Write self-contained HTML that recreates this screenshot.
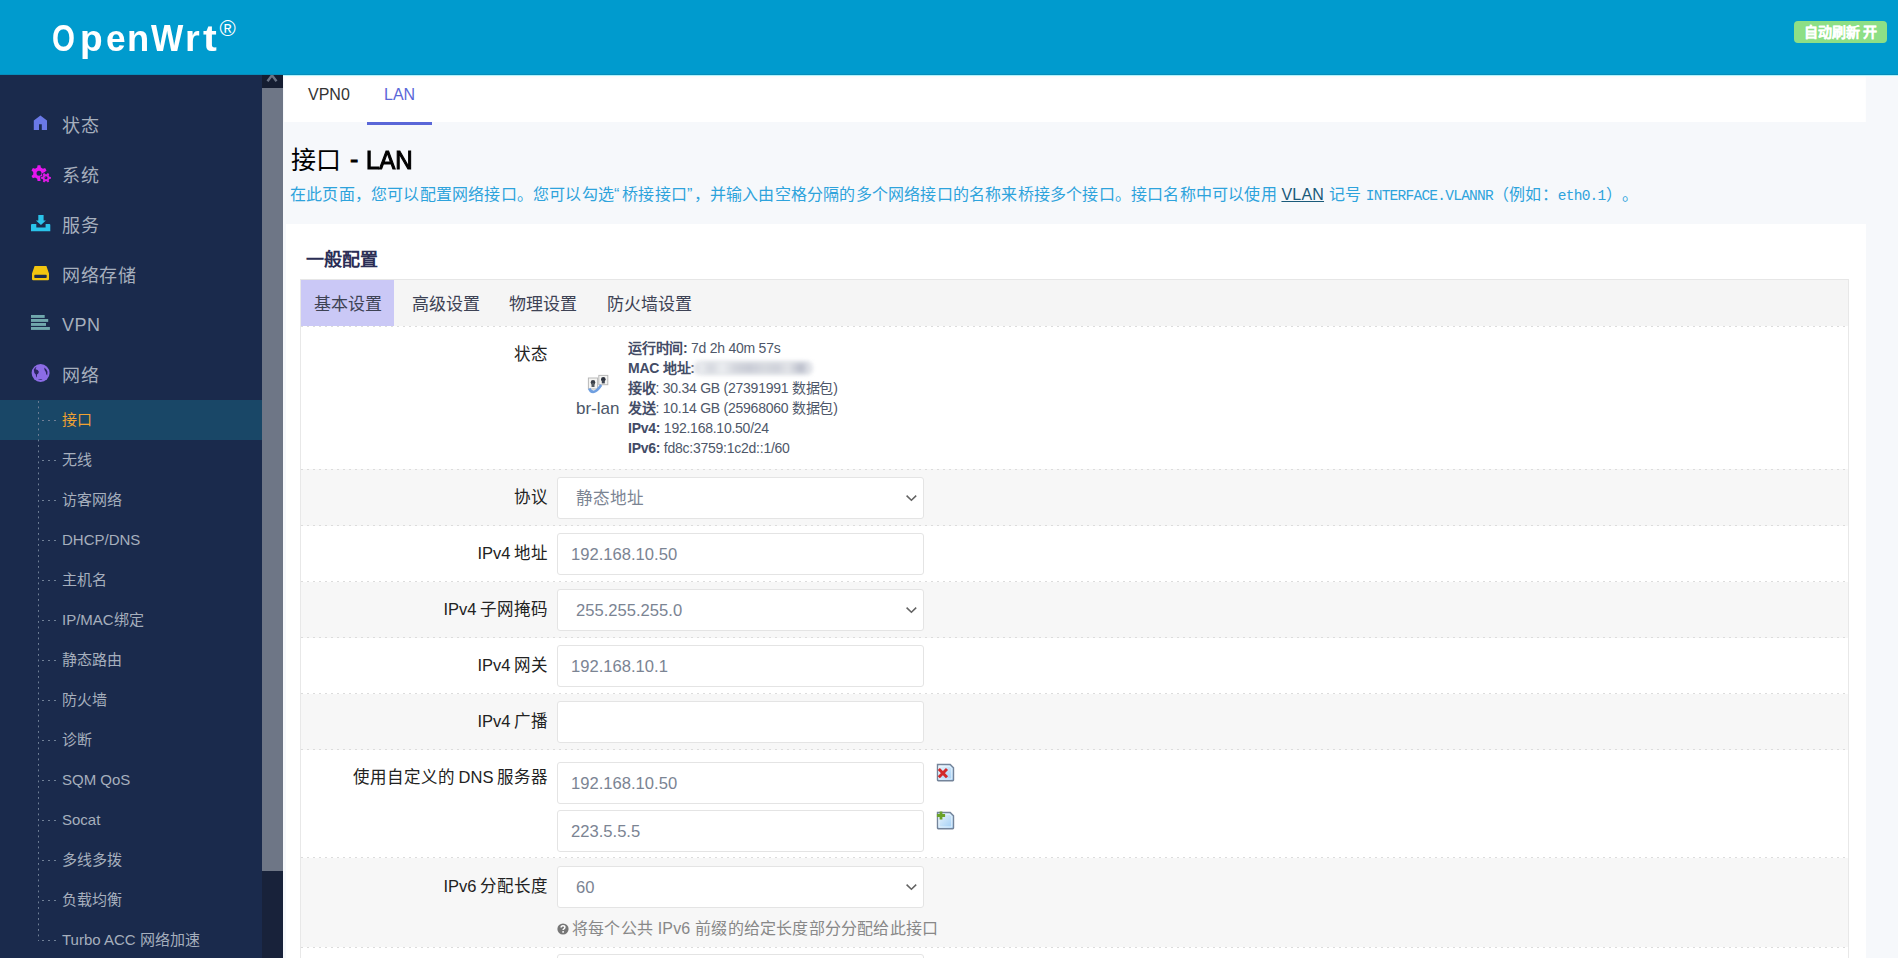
<!DOCTYPE html>
<html lang="zh-CN"><head><meta charset="utf-8">
<style>
html,body{margin:0;padding:0;}
body{width:1898px;height:958px;overflow:hidden;position:relative;background:#f6f8fb;font-family:"Liberation Sans",sans-serif;}
.abs{position:absolute;}
#hdr{left:0;top:0;width:1898px;height:75px;background:#009bce;}
#logo{left:52px;top:17px;width:200px;height:50px;color:#fff;font-weight:bold;font-size:36px;line-height:44px;white-space:nowrap;}
.lg{position:absolute;top:0;display:inline-block;transform:scaleX(0.88);transform-origin:0 0;}
.reg{position:absolute;left:167.5px;top:-10px;font-size:22px;font-weight:normal;}
#badge{left:1794px;top:21px;width:93px;height:22px;border-radius:4px;background:#8ddf86;color:#fff;font-weight:bold;font-size:14px;line-height:23px;-webkit-text-stroke:0.2px #fff;text-align:center;}
#side{left:0;top:75px;width:262px;height:883px;background:#1a2a4c;}
#sb{left:262px;top:75px;width:21px;height:883px;background:#18223a;}
#sbtop{left:262px;top:75px;width:21px;height:13px;background:#151d31;}
#thumb{left:262px;top:88px;width:21px;height:783px;background:#6e7686;}
.mi{position:absolute;letter-spacing:0.5px;left:62px;color:#a6afbd;font-size:18px;line-height:24px;white-space:nowrap;}
.ico{position:absolute;}
.sub{position:absolute;left:62px;color:#a6afbd;font-size:15px;line-height:20px;white-space:nowrap;}
.dots{position:absolute;left:42px;width:16px;height:1px;background-image:linear-gradient(to right,#6f7f96 30%,transparent 30%);background-size:6px 1px;}
#vline{left:38px;top:401px;width:1px;height:540px;background-image:linear-gradient(to bottom,#6f7f96 40%,transparent 40%);background-size:1px 5.5px;}
#hl{left:0;top:400px;width:262px;height:40px;background:#194767;}
/* main */
#tabbar{left:284px;top:75px;width:1582px;height:47px;background:#fff;box-shadow:inset 0 4px 5px -3px rgba(0,0,0,0.05);}
#cyl{left:283px;top:75px;width:1615px;height:1px;background:#b0f2fb;}
.tab{position:absolute;top:85px;font-size:16px;line-height:20px;color:#333;}
#tabul{left:367px;top:122px;width:65px;height:3px;background:#5a67d8;}
#title{left:291px;top:144px;font-size:25px;line-height:32px;color:#000;white-space:nowrap;}
#desc{text-spacing-trim:space-all;letter-spacing:0.2px;left:290px;top:185px;font-size:16px;line-height:20px;color:#2ea3dc;white-space:nowrap;}
#desc u{color:#1a5a7a;}
#desc .mono{font-family:"Liberation Mono",monospace;font-size:14.5px;letter-spacing:-0.75px;}
#card{left:286px;top:224px;width:1580px;height:734px;background:#fff;}
#legend{left:306px;top:249px;font-size:18px;line-height:22px;font-weight:bold;color:#2b2e55;}
#tbl{left:300px;top:279px;width:1547px;height:679px;border-left:1px solid #e8e8e8;border-right:1px solid #e8e8e8;border-top:1px solid #e6e6e6;background:#fff;}

.row{position:absolute;left:301px;width:1547px;}
.gray{background:#f7f7f7;}
.dash{position:absolute;left:301px;width:1547px;height:1px;background-image:linear-gradient(to right,#dcdcdc 34%,transparent 34%);background-size:6px 1px;}
.lbl{position:absolute;right:1350px;word-spacing:-1px;font-size:16.5px;line-height:20px;color:#222;white-space:nowrap;text-align:right;}
.inp{position:absolute;left:557px;width:365px;height:40px;border:1px solid #e4e4e4;border-radius:3px;background:#fff;}
.inp span{position:absolute;left:13px;top:10.5px;font-size:16.6px;line-height:20px;color:#7b8493;white-space:nowrap;}
.sel span{left:18px;}
.chev{position:absolute;right:5px;top:15px;}
#tabrow{left:301px;top:280px;width:1547px;height:46px;background:#f5f5f5;}
#acttab{left:301px;top:280px;width:93px;height:46px;background:#cac8f6;}
.ctab{position:absolute;top:295px;font-size:17px;line-height:20px;color:#3d4254;white-space:nowrap;}
.st{position:absolute;left:628px;font-size:14px;letter-spacing:-0.25px;line-height:20px;color:#4e5769;white-space:nowrap;}
.st b{color:#434c66;}
#brlan{left:576px;top:399px;font-size:17px;line-height:20px;color:#4c5667;}
.hint{position:absolute;letter-spacing:0.2px;left:557px;top:919px;font-size:16px;line-height:20px;color:#888;white-space:nowrap;}
</style></head><body>
<div id="hdr" class="abs"></div><div class="abs" style="left:0;top:74px;width:1898px;height:1px;background:#068cba"></div>
<div id="logo" class="abs"><span class="lg" style="left:0.0px;transform:scaleX(0.82)">O</span><span class="lg" style="left:27.6px;transform:scaleX(1.03)">p</span><span class="lg" style="left:53.8px;transform:scaleX(0.98)">e</span><span class="lg" style="left:75.0px;transform:scaleX(1.01)">n</span><span class="lg" style="left:99.4px;transform:scaleX(0.95)">W</span><span class="lg" style="left:133.4px;transform:scaleX(1.05)">r</span><span class="lg" style="left:151.4px;transform:scaleX(1.15)">t</span><span class="reg">®</span></div>
<div id="badge" class="abs">自动刷新 开</div>

<div id="side" class="abs"></div>
<div id="hl" class="abs"></div>
<div id="sb" class="abs"></div>
<div id="sbtop" class="abs"></div>
<div id="thumb" class="abs"></div><svg class="abs" style="left:266px;top:75px" width="12" height="8" viewBox="0 0 12 8"><path d="M1.5 6.3 L6 0.3 L10.5 6.3" fill="none" stroke="#6a7385" stroke-width="2.4"/></svg>


<svg class="ico" style="left:33px;top:115px" width="15" height="16" viewBox="0 0 15 16"><path d="M0.8 5.6 L7.4 0.6 L14 5.6 V15 H8.8 V9.3 H6 V15 H0.8Z" fill="#6a79e6"/></svg>
<svg class="ico" style="left:30px;top:164px" width="22" height="20" viewBox="0 0 22 20"><g transform="translate(1,0.6)"><path fill-rule="evenodd" fill="#e616ee" d="M6.18 2.99 L6.58 0.73 L9.42 0.73 L9.82 2.99 L11.95 4.22 L14.11 3.44 L15.53 5.89 L13.77 7.37 L13.77 9.83 L15.53 11.31 L14.11 13.76 L11.95 12.98 L9.82 14.21 L9.42 16.47 L6.58 16.47 L6.18 14.21 L4.05 12.98 L1.89 13.76 L0.47 11.31 L2.23 9.83 L2.23 7.37 L0.47 5.89 L1.89 3.44 L4.05 4.22Z M5.50 8.60 a2.5 2.5 0 1 0 5.0 0 a2.5 2.5 0 1 0 -5.0 0Z"/><path fill-rule="evenodd" fill="#dc1ae4" stroke="#1a2a4c" stroke-width="1.6" paint-order="stroke" d="M15.75 9.68 L16.69 8.50 L18.23 9.38 L17.68 10.79 L18.42 12.09 L19.92 12.31 L19.92 14.09 L18.42 14.31 L17.68 15.61 L18.23 17.02 L16.69 17.90 L15.75 16.72 L14.25 16.72 L13.31 17.90 L11.77 17.02 L12.32 15.61 L11.58 14.31 L10.08 14.09 L10.08 12.31 L11.58 12.09 L12.32 10.79 L11.77 9.38 L13.31 8.50 L14.25 9.68Z M13.50 13.20 a1.5 1.5 0 1 0 3.0 0 a1.5 1.5 0 1 0 -3.0 0Z"/></g></svg>
<svg class="ico" style="left:30px;top:214px" width="22" height="18" viewBox="0 0 22 18"><path fill="#2ac3ea" d="M8.3 1 H13.6 V6.4 H15.9 L10.95 10.9 L5.9 6.4 H8.3Z"/><path fill="#2ac3ea" d="M1 10.9 Q1 9.9 2 9.9 H6.3 V13.4 H15.6 V9.9 H19.3 Q20.3 9.9 20.3 10.9 V17.2 H1Z"/></svg>
<svg class="ico" style="left:31px;top:265px" width="19" height="16" viewBox="0 0 19 16"><path fill-rule="evenodd" fill="#f1c40f" d="M3.6 1 H15.4 L18 8.6 V14 Q18 15.2 16.8 15.2 H2.2 Q1 15.2 1 14 V8.6Z M3.3 10.4 Q3.3 9.7 4 9.7 H15 Q15.7 9.7 15.7 10.4 V12.2 Q15.7 12.9 15 12.9 H4 Q3.3 12.9 3.3 12.2Z"/></svg>
<svg class="ico" style="left:31px;top:315px" width="21" height="17" viewBox="0 0 21 17"><g fill="#70a8ad"><rect x="0" y="0" width="13.7" height="2.9"/><rect x="0" y="4" width="17.2" height="2.9"/><rect x="0" y="8" width="15" height="2.9"/><rect x="0" y="12" width="18.9" height="2.9"/></g></svg>
<svg class="ico" style="left:31px;top:363px" width="21" height="22" viewBox="0 0 21 22"><circle cx="9.6" cy="10" r="9" fill="#8c6ce6"/><g fill="#2a2660"><path d="M2.8 6.8 Q3.9 4.4 5.5 3.8 L4.5 6.3 Q7.1 6.7 7.9 8.8 Q7.6 11 6 11.6 L5.8 14.8 Q4.7 13.4 4.8 11.4 Q2.8 10.2 2.8 6.8Z"/><path d="M13.2 4.6 Q15.6 5.9 16.5 8.7 L16.2 12.4 Q14.8 11 14.8 8.9 Q13.2 7.9 13.2 4.6Z"/><path d="M6.9 16.8 Q9.2 15.9 11.6 16.4 Q9.6 17.6 6.9 16.8Z"/></g></svg>
<div class="mi" style="top:114px">状态</div>
<div class="mi" style="top:164px">系统</div>
<div class="mi" style="top:214px">服务</div>
<div class="mi" style="top:264px">网络存储</div>
<div class="mi" style="top:313px">VPN</div>
<div class="mi" style="top:364px">网络</div>

<div id="vline" class="abs"></div><div class="dots" style="top:420px"></div><div class="dots" style="top:460px"></div><div class="dots" style="top:500px"></div><div class="dots" style="top:540px"></div><div class="dots" style="top:580px"></div><div class="dots" style="top:620px"></div><div class="dots" style="top:660px"></div><div class="dots" style="top:700px"></div><div class="dots" style="top:740px"></div><div class="dots" style="top:780px"></div><div class="dots" style="top:820px"></div><div class="dots" style="top:860px"></div><div class="dots" style="top:900px"></div><div class="dots" style="top:940px"></div>
<div class="sub" style="top:410px;color:#f0a232">接口</div>
<div class="sub" style="top:450px">无线</div>
<div class="sub" style="top:490px">访客网络</div>
<div class="sub" style="top:530px">DHCP/DNS</div>
<div class="sub" style="top:570px">主机名</div>
<div class="sub" style="top:610px">IP/MAC绑定</div>
<div class="sub" style="top:650px">静态路由</div>
<div class="sub" style="top:690px">防火墙</div>
<div class="sub" style="top:730px">诊断</div>
<div class="sub" style="top:770px">SQM QoS</div>
<div class="sub" style="top:810px">Socat</div>
<div class="sub" style="top:850px">多线多拨</div>
<div class="sub" style="top:890px">负载均衡</div>
<div class="sub" style="top:930px">Turbo ACC 网络加速</div>

<div id="tabbar" class="abs"></div>
<div id="cyl" class="abs"></div>
<div class="tab" style="left:308px">VPN0</div>
<div class="tab" style="left:384px;color:#5a67d8">LAN</div>
<div id="tabul" class="abs"></div>

<div id="title" class="abs">接口<span style="margin-left:9px;-webkit-text-stroke:0.8px #000;position:relative;top:-1px">-</span><span style="margin-left:8px;display:inline-block;-webkit-text-stroke:1.1px #000;transform:scaleX(0.96);transform-origin:0 0">LAN</span></div>
<div id="desc" class="abs">在此页面，您可以配置网络接口。您可以勾选<span style="letter-spacing:2.9px">“</span>桥接接口<span style="letter-spacing:1.2px">”</span>，并输入由空格分隔的多个网络接口的名称来桥接多个接口。接口名称中可以使用 <u>VLAN</u> 记号 <span class="mono">INTERFACE.VLANNR</span>（例如：<span class="mono">eth0.1</span>）。</div>

<div id="card" class="abs"></div>
<div id="legend" class="abs">一般配置</div>
<div id="tbl" class="abs"></div>
<div id="tabrow" class="abs"></div>
<div id="acttab" class="abs"></div>
<div class="ctab" style="left:314px">基本设置</div>
<div class="ctab" style="left:412px">高级设置</div>
<div class="ctab" style="left:509px">物理设置</div>
<div class="ctab" style="left:607px">防火墙设置</div>

<div class="row gray" style="top:469px;height:57px"></div>
<div class="row gray" style="top:582px;height:56px"></div>
<div class="row gray" style="top:694px;height:56px"></div>
<div class="row gray" style="top:858px;height:89px"></div>
<div class="dash" style="top:326px"></div>
<div class="dash" style="top:469px"></div>
<div class="dash" style="top:525px"></div>
<div class="dash" style="top:581px"></div>
<div class="dash" style="top:637px"></div>
<div class="dash" style="top:693px"></div>
<div class="dash" style="top:749px"></div>
<div class="dash" style="top:857px"></div>
<div class="dash" style="top:947px"></div>

<div class="lbl" style="top:344px">状态</div>
<div class="st" style="top:338px"><b>运行时间:</b> 7d 2h 40m 57s</div>
<div class="st" style="top:358px"><b>MAC 地址:</b><span style="position:absolute;left:65px;top:3px;width:120px;height:14px;background:#e3e5ea;border-radius:7px;filter:blur(2px)"></span><span style="position:absolute;left:72px;top:5px;width:110px;height:10px;filter:blur(2.2px);background:linear-gradient(to right,#eceef1 0%,#d4d7de 10%,#eceef1 20%,#d2d5dc 32%,#c9ccd6 45%,#d6d9df 58%,#cfd2da 70%,#e2e4e8 80%,#b9bdca 92%,#e6e8ec 100%)"></span></div>
<div class="st" style="top:378px"><b>接收</b>: 30.34 GB (27391991 数据包)</div>
<div class="st" style="top:398px"><b>发送</b>: 10.14 GB (25968060 数据包)</div>
<div class="st" style="top:418px"><b>IPv4:</b> 192.168.10.50/24</div>
<div class="st" style="top:438px"><b>IPv6:</b> fd8c:3759:1c2d::1/60</div>
<div id="brlan" class="abs">br-lan</div><svg class="abs" style="left:586px;top:373px" width="24" height="21" viewBox="0 0 24 21"><rect x="12.8" y="2.4" width="9" height="9.3" fill="#f4f4f2" stroke="#b8b8b8" stroke-width="1"/><circle cx="17.3" cy="6.3" r="2.3" fill="#2d3340"/><rect x="15.8" y="7" width="3" height="3.4" fill="#3e4450"/><rect x="2.4" y="5" width="9.2" height="11" fill="#f4f4f2" stroke="#b8b8b8" stroke-width="1"/><circle cx="7" cy="9.4" r="2.3" fill="#3a3f48"/><rect x="5.5" y="10" width="3" height="4" fill="#555b60"/><path d="M3.3 15.5 Q4.5 19.3 8 18.8 Q11 18.2 15.2 12" fill="none" stroke="#6f9fe0" stroke-width="2.6"/></svg><svg width="0" height="0" style="position:absolute"><defs><linearGradient id="pg" x1="0" y1="0" x2="1" y2="1"><stop offset="0" stop-color="#eef7fd"/><stop offset="1" stop-color="#9ccbf4"/></linearGradient></defs></svg><svg class="abs" style="left:936px;top:763px" width="19" height="19" viewBox="0 0 19 19"><path d="M1.5 1.5 H14.2 L17.5 4.8 V17 Q17.5 17.7 16.8 17.7 H2.2 Q1.5 17.7 1.5 17Z" fill="url(#pg)" stroke="#74849a" stroke-width="1.4"/><path d="M3 3.2 H13.4 L15.8 5.6 V16 H3Z" fill="none" stroke="#f4fbff" stroke-width="0.9" opacity="0.8"/><path d="M2.8 6 L11 14.2 M11 6 L2.8 14.2" stroke="#d22a2a" stroke-width="3"/></svg><svg class="abs" style="left:936px;top:811px" width="19" height="19" viewBox="0 0 19 19"><path d="M1.5 1.5 H14.2 L17.5 4.8 V17 Q17.5 17.7 16.8 17.7 H2.2 Q1.5 17.7 1.5 17Z" fill="url(#pg)" stroke="#74849a" stroke-width="1.4"/><path d="M3 3.2 H13.4 L15.8 5.6 V16 H3Z" fill="none" stroke="#f4fbff" stroke-width="0.9" opacity="0.8"/><path d="M5 0.4 V8.6 M0.9 4.5 H9.1" stroke="#6aa22a" stroke-width="2.8"/></svg>

<div class="lbl" style="top:487px">协议</div>
<div class="inp sel" style="top:477px"><span>静态地址</span><svg class="chev" width="14" height="10" viewBox="0 0 14 10"><path d="M2.6 2.6 L7.4 7.2 L12.2 2.6" fill="none" stroke="#626262" stroke-width="1.5"/></svg></div>
<div class="lbl" style="top:543px">IPv4 地址</div>
<div class="inp" style="top:533px"><span>192.168.10.50</span></div>
<div class="lbl" style="top:599px">IPv4 子网掩码</div>
<div class="inp sel" style="top:589px"><span>255.255.255.0</span><svg class="chev" width="14" height="10" viewBox="0 0 14 10"><path d="M2.6 2.6 L7.4 7.2 L12.2 2.6" fill="none" stroke="#626262" stroke-width="1.5"/></svg></div>
<div class="lbl" style="top:655px">IPv4 网关</div>
<div class="inp" style="top:645px"><span>192.168.10.1</span></div>
<div class="lbl" style="top:711px">IPv4 广播</div>
<div class="inp" style="top:701px"><span></span></div>
<div class="lbl" style="top:767px">使用自定义的 DNS 服务器</div>
<div class="inp" style="top:762px"><span>192.168.10.50</span></div>
<div class="inp" style="top:810px"><span>223.5.5.5</span></div>
<div class="lbl" style="top:876px">IPv6 分配长度</div>
<div class="inp sel" style="top:866px"><span>60</span><svg class="chev" width="14" height="10" viewBox="0 0 14 10"><path d="M2.6 2.6 L7.4 7.2 L12.2 2.6" fill="none" stroke="#626262" stroke-width="1.5"/></svg></div>
<div class="hint"><svg style="position:absolute;left:0;top:4px" width="12" height="12" viewBox="0 0 12 12"><circle cx="6" cy="6" r="5.6" fill="#777"/><path d="M4.1 4.6 Q4.1 2.7 6 2.7 Q7.9 2.7 7.9 4.3 Q7.9 5.3 6.9 5.8 Q6.1 6.2 6.1 7.1" fill="none" stroke="#fff" stroke-width="1.5"/><rect x="5.3" y="8.1" width="1.6" height="1.6" fill="#fff"/></svg><span style="padding-left:15px">将每个公共 IPv6 前缀的给定长度部分分配给此接口</span></div>
<div class="inp" style="top:954px"><span></span></div>


</body></html>
